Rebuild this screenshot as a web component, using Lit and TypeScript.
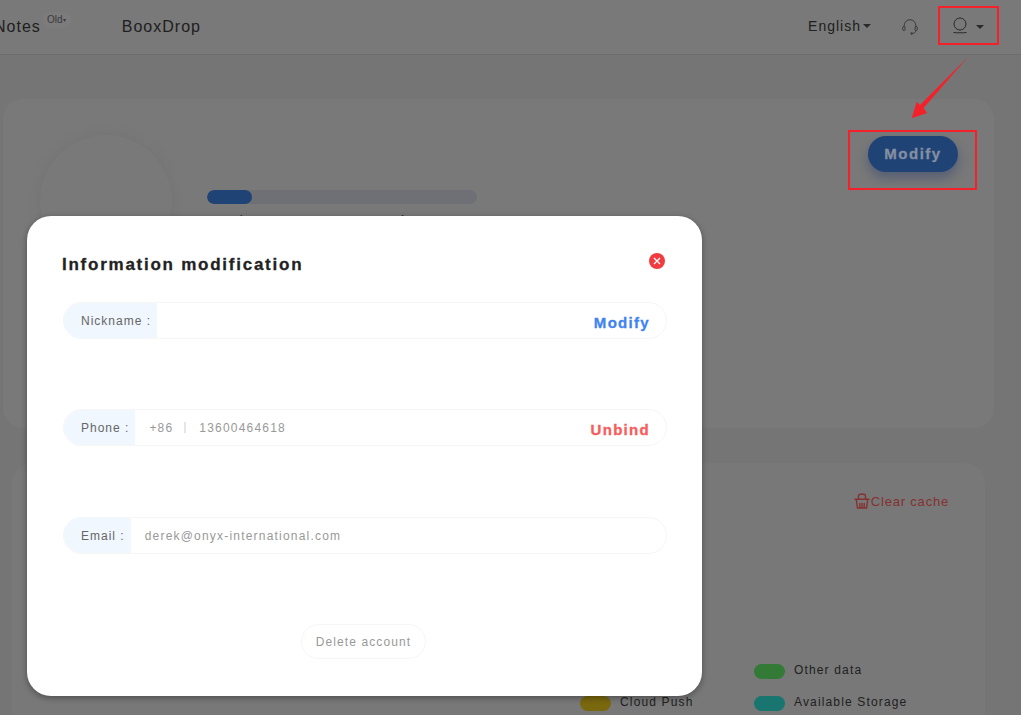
import { LitElement, html, css } from "lit";
import { customElement } from "lit/decorators.js";

@customElement("app-root")
export class AppRoot extends LitElement {
  static styles = css`
    :host { display: block; position: relative; width: 1021px; height: 715px; overflow: hidden; background: #757575; font-family: "Liberation Sans", Arial, sans-serif; letter-spacing: 1px; color: #202020; }
    * { box-sizing: border-box; }
    .nav { height: 55px; background: #797979; border-bottom: 1px solid #6c6c6c; display: flex; align-items: center; font-size: 16px; padding-right: 37px; }
    .notes { margin-left: -6px; }
    .old { width: 29px; height: 16px; margin: -15px 0 0 1px; border-radius: 8px; background: #7c7c7c; color: #3a3a3a; font-size: 10px; letter-spacing: 0; display: flex; align-items: center; justify-content: center; }
    .drop { margin-left: 51px; }
    .spacer { flex: 1; }
    .lang { font-size: 14px; display: flex; align-items: center; gap: 2px; position: relative; top: -1px; }
    .caret { width: 0; height: 0; border: 4px solid transparent; border-top-color: #2a2a2a; border-bottom: 0; }
    .head { margin-left: 31px; display: block; }
    .user { margin-left: 34px; margin-top: -3px; display: block; }
    .user-caret { margin-left: 8px; }
    .main { padding-top: 44px; }
    .card { background: #797979; border-radius: 20px; }
    .c1 { margin: 0 27px 0 3px; height: 329px; padding: 36px 36px 0 37px; display: flex; align-items: flex-start; }
    .avatar { width: 132px; height: 132px; border-radius: 50%; background: #797979; box-shadow: 0 0 10px #737373; flex: none; }
    .storage { margin-left: 35px; padding-top: 55px; font-size: 14px; color: #2e2e2e; }
    .bar { width: 270px; height: 14px; border-radius: 7px; background: #6e7075; overflow: hidden; margin-bottom: 9px; }
    .fill { height: 14px; border-radius: 7px; background: #204376; }
    .num { font-weight: 700; margin-left: 8px; }
    .modify { width: 90px; height: 36px; margin-top: 1px; padding-bottom: 2px; border-radius: 18px; background: #204376; color: #848fa2; font-weight: 700; font-size: 15px; letter-spacing: 1.5px; -webkit-text-stroke: .3px #848fa2; display: flex; align-items: center; justify-content: center; box-shadow: 0 6px 12px rgba(40, 60, 110, .45); }
    .c2 { margin: 35px 36px 0 12px; height: 300px; padding: 29px 36px 0 0; background: #787878; }
    .clear { display: flex; justify-content: flex-end; align-items: center; gap: 1px; color: #853131; font-size: 13px; letter-spacing: .8px; height: 18px; }
    .legend { display: grid; grid-template-columns: 174px 174px; row-gap: 17px; margin: 154px 0 0 568px; font-size: 12px; letter-spacing: 1.15px; }
    .li { display: flex; align-items: flex-start; gap: 9px; height: 15px; line-height: 13px; color: #202020; }
    .sw { width: 31px; height: 15px; border-radius: 8px; flex: none; }
    .modal { position: absolute; left: 27px; top: 216px; width: 675px; height: 480px; border-radius: 24px; background: #fff; box-shadow: 0 2px 6px rgba(0, 0, 0, .35); padding: 39px 35px 0 36px; }
    .top { display: flex; justify-content: space-between; align-items: flex-start; height: 47px; }
    .title { font-size: 17px; font-weight: 700; letter-spacing: 1.75px; color: #222; line-height: 19px; margin-left: -1px; -webkit-text-stroke: .3px #222; }
    .x { display: block; margin: -2px 2px 0 0; }
    .row { height: 37px; border: 1px solid #f6f6f6; border-radius: 19px; display: flex; align-items: center; margin-bottom: 70px; font-size: 12px; overflow: hidden; }
    .row.second { margin-bottom: 71px; }
    .label { height: 100%; background: #f0f7ff; color: #666; padding: 0 6px 0 17px; display: flex; align-items: center; white-space: pre; }
    .val { color: #999; margin-left: 14px; display: flex; align-items: center; font-size: 12px; letter-spacing: 1.2px; flex: 1; }
    .sep { width: 2px; height: 11px; background: #e6e6e6; margin: 0 13px 0 11px; }
    .act { font-weight: 700; font-size: 15px; letter-spacing: 1.3px; margin-right: 16px; padding-top: 3px; }
    .blue { color: #3f83f3; -webkit-text-stroke: .3px #3f83f3; }
    .red { color: #f85c5c; -webkit-text-stroke: .3px #f85c5c; }
    .del-wrap { display: flex; justify-content: center; margin: 0 3px 0 0; }
    .del { height: 35px; width: 125px; border: 1px solid #f6f6f6; border-radius: 18px; color: #999; font-size: 12px; letter-spacing: 1.1px; display: flex; align-items: center; justify-content: center; }
    .mark { position: absolute; border: 2px solid #f4202a; }
    .m1 { left: 938px; top: 6px; width: 61px; height: 39px; }
    .m2 { left: 848px; top: 130px; width: 129px; height: 60px; }
    .arrow { position: absolute; left: 905px; top: 50px; }
  `;

  render() {
    return html`
      <div class="nav">
        <span class="notes">Notes</span>
        <span class="old">Old<span style="font-size:6px">▾</span></span>
        <span class="drop">BooxDrop</span>
        <span class="spacer"></span>
        <span class="lang">English<span class="caret"></span></span>
        <svg class="head" width="16" height="16" viewBox="0 0 16 16" fill="none" stroke="#333" stroke-width=".9">
          <path d="M2.2 8V6.5a5.8 5.8 0 0 1 11.6 0V8"/>
          <rect x=".7" y="7.5" width="2.3" height="4" rx="1.15"/>
          <rect x="13" y="7.5" width="2.3" height="4" rx="1.15"/>
          <path d="M13.8 11.5c-.3 2-1.8 3-3.8 3M8.6 14.5l1.4-.9v1.8z"/>
        </svg>
        <svg class="user" width="16" height="18" viewBox="0 0 16 18" fill="none" stroke="#2a2a2a" stroke-width="1">
          <circle cx="8" cy="7" r="6"/>
          <path d="M1.5 15.5c3 .4 10 .4 13 0"/>
        </svg>
        <span class="caret user-caret"></span>
      </div>
      <div class="main">
        <div class="card c1">
          <div class="avatar"></div>
          <div class="storage">
            <div class="bar"><div class="fill" style="width:45px"></div></div>
            Used Storage: <span class="num">256.39MB / 16.00GB</span>
          </div>
          <span class="spacer"></span>
          <div class="modify">Modify</div>
        </div>
        <div class="card c2">
          <div class="clear">
            <svg width="16" height="16" viewBox="0 0 16 16" fill="none" stroke="#853131" stroke-width="1.4">
              <path d="M.5 6.2h15M4.5 6V3.2a2 2 0 0 1 2-2h3a2 2 0 0 1 2 2V6"/>
              <path d="M2.3 6.5 3.4 15h9.2l1.1-8.5"/>
              <path d="M5.8 10v5M8 10v5M10.2 10v5"/>
            </svg>
            Clear cache
          </div>
          <div class="legend">
            <div class="li"><span class="sw" style="background:#314a76"></span>Notes</div>
            <div class="li"><span class="sw" style="background:#337a37"></span>Other data</div>
            <div class="li"><span class="sw" style="background:#7a680e"></span>Cloud Push</div>
            <div class="li"><span class="sw" style="background:#18756f"></span>Available Storage</div>
          </div>
        </div>
      </div>

      <div class="modal">
        <div class="top">
          <div class="title">Information modification</div>
          <svg class="x" width="16" height="16" viewBox="0 0 16 16">
            <circle cx="8" cy="8" r="8" fill="#f03c40"/>
            <path d="M5 5l6 6M11 5l-6 6" stroke="#fff" stroke-width="1.3"/>
          </svg>
        </div>
        <div class="row">
          <div class="label">Nickname :</div>
          <span class="val"></span>
          <span class="act blue">Modify</span>
        </div>
        <div class="row second">
          <div class="label">Phone :</div>
          <span class="val">+86<span class="sep"></span>13600464618</span>
          <span class="act red">Unbind</span>
        </div>
        <div class="row">
          <div class="label">Email :</div>
          <span class="val">derek@onyx-international.com</span>
        </div>
        <div class="del-wrap"><div class="del">Delete account</div></div>
      </div>

      <div class="mark m1"></div>
      <div class="mark m2"></div>
      <svg class="arrow" width="70" height="72" viewBox="0 0 70 72">
        <path d="M63 7 L18.5 58 L22 63 L6.7 68.3 L11.7 51.7 L15 55 Z" fill="#f4202a"/>
      </svg>
    `;
  }
}
